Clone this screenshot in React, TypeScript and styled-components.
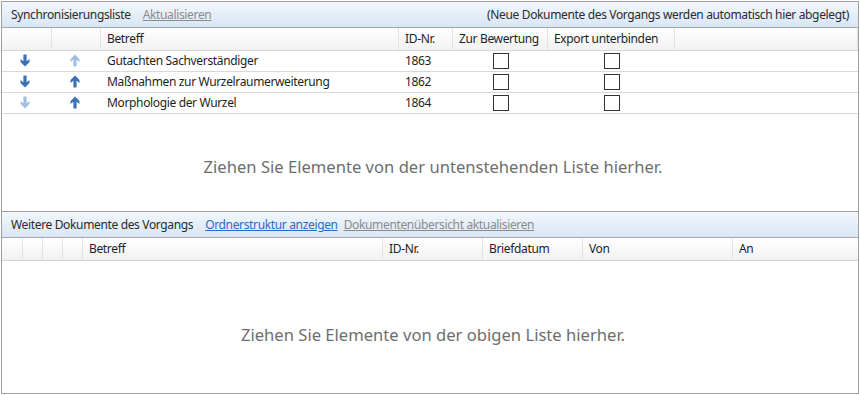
import React from 'react';
import styled, { createGlobalStyle } from 'styled-components';

const GlobalStyle = createGlobalStyle`
  html, body {
    margin: 0;
    padding: 0;
    background: #ffffff;
  }
  body {
    font-family: "Segoe UI", "Noto Sans", "Liberation Sans", sans-serif;
    font-size: 12px;
    letter-spacing: -0.35px;
    color: #1e1e1e;
  }
`;

const Frame = styled.div`
  margin: 1px 0 0 1px;
  width: 858px;
  height: 393px;
  box-sizing: border-box;
  border: 1px solid #a0a0a0;
  display: flex;
  flex-direction: column;
  background: #ffffff;
`;

const Section = styled.section<{ $height: number; $divider?: boolean }>`
  height: ${(p) => p.$height}px;
  display: flex;
  flex-direction: column;
  border-top: ${(p) => (p.$divider ? '1px solid #a0a0a0' : 'none')};
  flex-shrink: 0;
`;

const Toolbar = styled.div`
  height: 25px;
  flex-shrink: 0;
  display: flex;
  align-items: center;
  gap: 12px;
  padding: 0 9px;
  border-bottom: 1px solid #a6a6a6;
  background: linear-gradient(#f2f7fc, #d9e6f4);
  white-space: nowrap;
`;

const ToolbarTitle = styled.span`
  color: #2b2b2b;
`;

const LinkGroup = styled.span`
  display: flex;
  gap: 6px;
`;

const ToolLink = styled.a<{ $active?: boolean }>`
  color: ${(p) => (p.$active ? '#2a6ccb' : '#8c8c8c')};
  text-decoration: underline;
  cursor: pointer;
`;

const Hint = styled.span`
  margin-left: auto;
  color: #2b2b2b;
`;

const Grid = styled.div<{ $cols: string }>`
  display: grid;
  grid-template-columns: ${(p) => p.$cols};
`;

const HeadCell = styled.div`
  height: 23px;
  box-sizing: border-box;
  padding: 0 0 1px 6px;
  display: flex;
  align-items: center;
  border-right: 1px solid #e2e2e2;
  border-bottom: 1px solid #d5d5d5;
  background: linear-gradient(#ffffff, #f1f1f1);
  white-space: nowrap;
  overflow: hidden;

  &:last-child {
    border-right: none;
  }
`;

const Cell = styled.div<{ $center?: boolean; $shift?: number }>`
  height: 21px;
  box-sizing: border-box;
  padding-left: ${(p) => (p.$center ? '0' : '6px')};
  padding-right: ${(p) => (p.$shift ? `${p.$shift}px` : '0')};
  padding-bottom: 2px;
  display: flex;
  align-items: center;
  justify-content: ${(p) => (p.$center ? 'center' : 'flex-start')};
  border-bottom: 1px solid #d8d8d8;
  white-space: nowrap;
`;

const Checkbox = styled.span`
  width: 16px;
  height: 16px;
  box-sizing: border-box;
  border: 1px solid #333333;
  background: #ffffff;
  margin-top: 2px;
`;

const DropArea = styled.div<{ $offset: number }>`
  flex: 1;
  display: flex;
  align-items: center;
  justify-content: center;
  padding-top: ${(p) => p.$offset}px;
  padding-left: 6px;
  font-size: 16.6px;
  letter-spacing: 0;
  color: #6e6e6e;
`;

const Arrow: React.FC<{ dir: 'up' | 'down'; light?: boolean }> = ({ dir, light }) => (
  <svg
    width="10"
    height="13"
    viewBox="0 0 10 13"
    style={{ transform: dir === 'up' ? 'rotate(180deg)' : undefined }}
  >
    <path
      d="M3.4 0.5 H6.6 V7.2 L9.5 5 V8 L5 12.5 L0.5 8 V5 L3.4 7.2 Z"
      fill={light ? '#a3c0de' : '#3c72b3'}
    />
  </svg>
);

const syncCols = '50px 49px 298px 54px 95px 127px 1fr';
const otherCols = '21px 20px 20px 20px 300px 100px 100px 150px 1fr';

const syncRows = [
  { title: 'Gutachten Sachverständiger', id: '1863', down: true, up: false },
  { title: 'Maßnahmen zur Wurzelraumerweiterung', id: '1862', down: true, up: true },
  { title: 'Morphologie der Wurzel', id: '1864', down: false, up: true },
];

const App: React.FC = () => (
  <>
    <GlobalStyle />
    <Frame>
      <Section $height={209}>
        <Toolbar>
          <ToolbarTitle>Synchronisierungsliste</ToolbarTitle>
          <LinkGroup>
            <ToolLink>Aktualisieren</ToolLink>
          </LinkGroup>
          <Hint>(Neue Dokumente des Vorgangs werden automatisch hier abgelegt)</Hint>
        </Toolbar>
        <Grid $cols={syncCols}>
          <HeadCell />
          <HeadCell />
          <HeadCell>Betreff</HeadCell>
          <HeadCell>ID-Nr.</HeadCell>
          <HeadCell>Zur Bewertung</HeadCell>
          <HeadCell>Export unterbinden</HeadCell>
          <HeadCell />
          {syncRows.map((r) => (
            <React.Fragment key={r.id}>
              <Cell $center $shift={5}>
                <Arrow dir="down" light={!r.down} />
              </Cell>
              <Cell $center $shift={3}>
                <Arrow dir="up" light={!r.up} />
              </Cell>
              <Cell>{r.title}</Cell>
              <Cell>{r.id}</Cell>
              <Cell $center>
                <Checkbox />
              </Cell>
              <Cell $center>
                <Checkbox />
              </Cell>
              <Cell />
            </React.Fragment>
          ))}
        </Grid>
        <DropArea $offset={7}>Ziehen Sie Elemente von der untenstehenden Liste hierher.</DropArea>
      </Section>
      <Section $height={182} $divider>
        <Toolbar>
          <ToolbarTitle>Weitere Dokumente des Vorgangs</ToolbarTitle>
          <LinkGroup>
            <ToolLink $active>Ordnerstruktur anzeigen</ToolLink>
            <ToolLink>Dokumentenübersicht aktualisieren</ToolLink>
          </LinkGroup>
        </Toolbar>
        <Grid $cols={otherCols}>
          <HeadCell />
          <HeadCell />
          <HeadCell />
          <HeadCell />
          <HeadCell>Betreff</HeadCell>
          <HeadCell>ID-Nr.</HeadCell>
          <HeadCell>Briefdatum</HeadCell>
          <HeadCell>Von</HeadCell>
          <HeadCell>An</HeadCell>
        </Grid>
        <DropArea $offset={13}>Ziehen Sie Elemente von der obigen Liste hierher.</DropArea>
      </Section>
    </Frame>
  </>
);

export default App;
